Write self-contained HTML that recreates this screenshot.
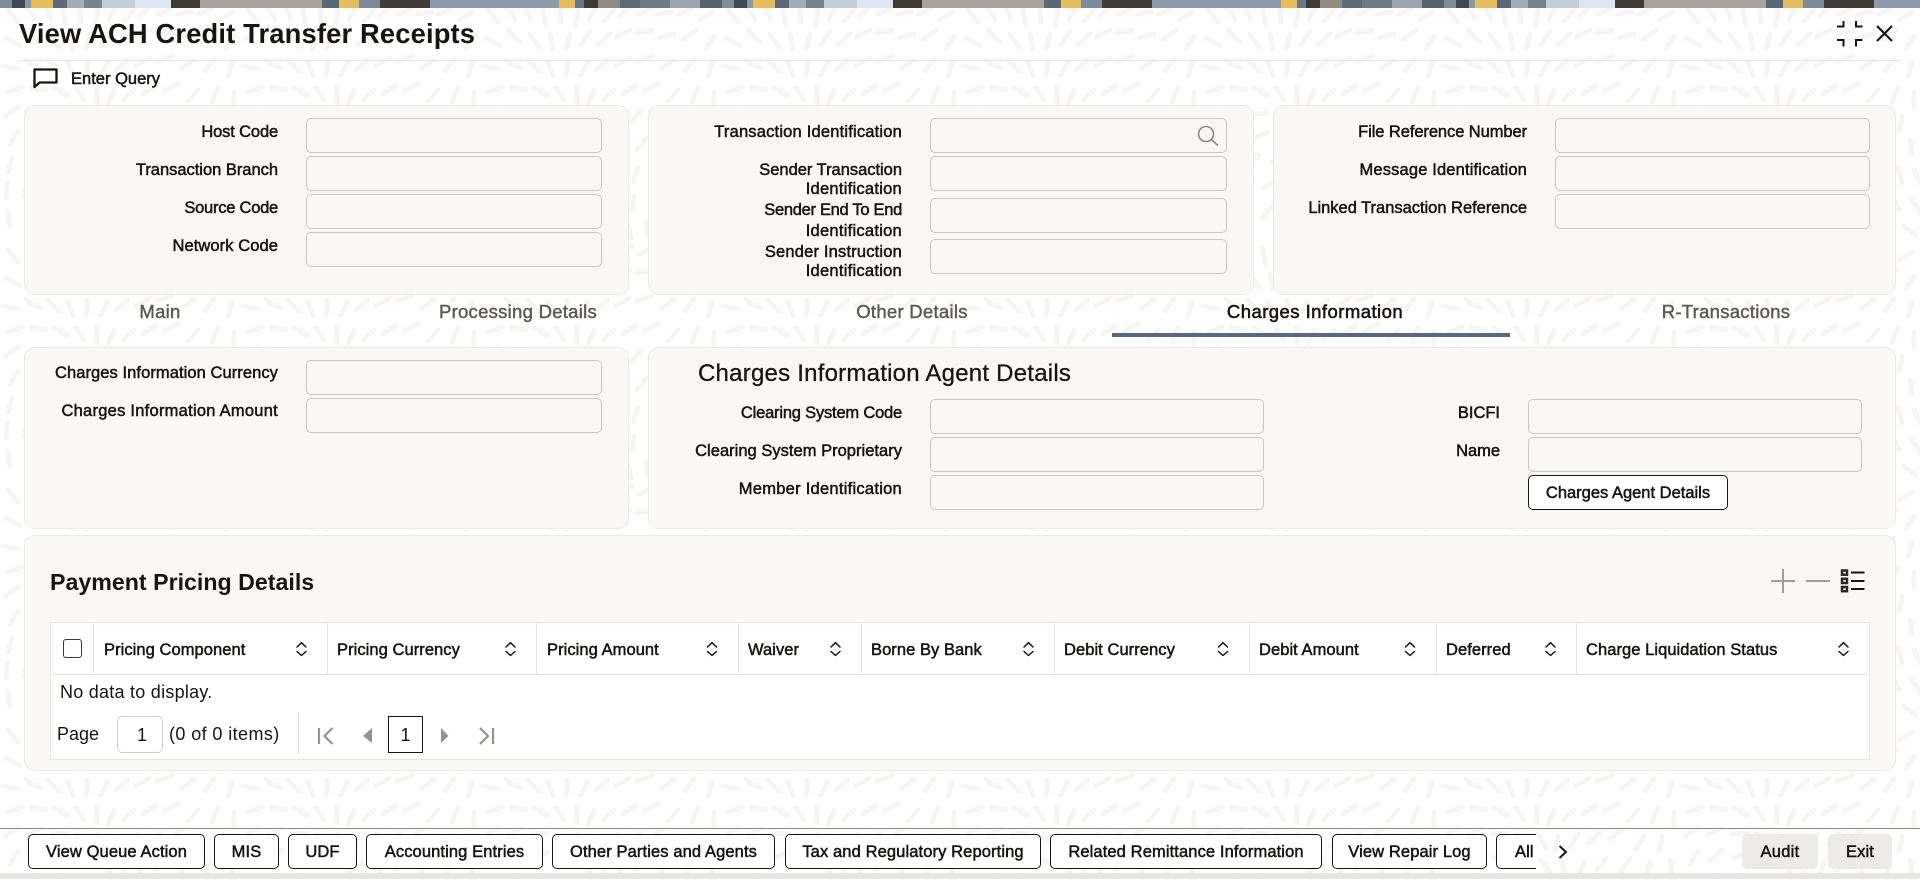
<!DOCTYPE html>
<html lang="en">
<head>
<meta charset="utf-8">
<title>View ACH Credit Transfer Receipts</title>
<style>
html,body{margin:0;padding:0;width:1920px;height:879px;overflow:hidden;background:#fff}
body{position:relative;font-family:"Liberation Sans",Arial,sans-serif;color:#161513}
.a,.l,.t,.c,.i,.b,.h,.ln{position:absolute;box-sizing:border-box}
#bg{position:absolute;left:0;top:0}
#band{position:absolute;left:0;top:0;width:1920px;height:8px;background-size:722px 8px;background-image:linear-gradient(90deg,#7f8c9a 0 12px,#3f4a55 12px 25px,#8a97a5 25px 31px,#e6bd5c 31px 53px,#5c6875 53px 67px,#a3adb8 67px 84px,#76838f 84px 102px,#c3cedc 102px 135px,#dde5f1 135px 171px,#3d3a38 171px 200px,#a8a29a 200px 322px,#5a6875 322px 339px,#e6bd5c 339px 359px,#7d8a99 359px 380px,#3f3c3a 380px 430px,#8e9baa 430px 559px,#e6bd5c 559px 575px,#6a7785 575px 584px,#3d3a38 584px 598px,#8f8a84 598px 620px,#5e6b78 620px 640px,#6e7a88 640px 670px,#9aa5b1 670px 700px,#55616d 700px 722px)}
.c{background:#f9f8f6;border:1px solid #ebeae8;border-radius:11px}
.i{background:#f9f8f6;border:1px solid #c9c7c4;border-radius:5px;height:35px;padding:0;margin:0;display:block}
.l{font-size:16.5px;line-height:20px;letter-spacing:-.02px;text-align:right;white-space:nowrap;-webkit-text-stroke:.5px #161513}
.t{font-size:18.5px;line-height:22px;letter-spacing:.27px;white-space:nowrap;color:#5d5955;-webkit-text-stroke:.45px #5d5955;transform:translateX(-50%)}
.h{font-size:16.5px;line-height:20px;letter-spacing:.06px;white-space:nowrap;top:640px;-webkit-text-stroke:.5px #161513}
.b{top:834px;height:35px;background:#fff;border:1px solid #161513;border-radius:5px;font:16.5px/34px "Liberation Sans",Arial,sans-serif;letter-spacing:.11px;text-align:center;color:#161513;padding:0;margin:0;white-space:nowrap;-webkit-text-stroke:.5px #161513}
.ln{background:#e6e5e2;width:1px;top:623px;height:51px}
.r{font-size:18px;line-height:22px;white-space:nowrap;position:absolute}
svg.ic{position:absolute;left:0;top:0;overflow:visible}
</style>
</head>
<body>
<svg id="bg" width="1920" height="879" xmlns="http://www.w3.org/2000/svg">
<defs>
<pattern id="rice" width="240" height="240" patternUnits="userSpaceOnUse">
<g stroke="#f6f5f3" stroke-width="5" stroke-linecap="round" fill="none">
<path d="M8 10l10 12M26 6l9 13M44 4l7 15M62 8l4 16M80 6l1 16M98 10l-3 15M116 6l-7 14M134 10l-10 11M152 6l-12 9M172 8l-14 6M192 12l-15 2M212 8l-14 6M232 12l-13 8"/>
<path d="M6 38l14 8M28 30l12 12M50 34l8 13M70 34l3 15M90 34l-4 15M110 32l-9 13M130 34l-12 10M150 30l-14 7M172 30l-15 3M194 34l-15 4M216 30l-13 9M234 36l-8 13"/>
<path d="M4 66l15 3M26 60l14 8M48 60l11 11M68 62l5 14M88 60l-2 15M108 62l-8 13M128 60l-12 10M150 58l-14 8M172 56l-15 5M194 60l-13 9M214 58l-9 13M232 62l-4 15"/>
<path d="M8 92l14-5M32 88l14 2M54 88l13 7M76 88l8 12M96 88l1 15M114 90l-6 14M134 90l-11 10M156 86l-13 8M178 84l-14 7M198 90l-10 11M218 88l-6 14M234 92l0 15"/>
<path d="M6 116l12-9M28 114l14-6M52 114l15-1M76 114l13 7M98 114l7 13M118 116l-3 15M138 114l-8 13M160 112l-11 11M182 110l-12 9M204 116l-8 13M222 116l-3 15"/>
<path d="M10 144l8-13M30 140l12-10M54 138l14-6M78 140l15 3M100 140l10 11M122 142l3 15M144 142l-5 14M166 138l-9 12M190 138l-8 13M210 142l-4 15M230 140l2 15"/>
<path d="M8 172l4-15M28 168l8-13M48 166l11-11M72 162l15-2M96 166l13 6M118 168l7 13M138 170l1 15M158 168l-5 14M178 166l-3 15M198 170l1 15M218 168l4 15M234 170l6 13"/>
<path d="M6 198l1-15M24 196l4-15M44 192l8-13M64 188l12-8M90 188l14 4M112 194l11 10M134 198l5 14M154 196l-2 15M174 194l1 15M192 198l4 14M212 196l7 13M232 200l8 12"/>
<path d="M10 226l-3-15M26 224l2-15M44 222l5-15M62 218l10-11M84 214l14 1M106 218l12 9M126 224l8 12M148 224l3 15M166 222l3 15M184 224l6 13M204 222l9 11M224 226l11 9"/>
</g>
</pattern>
</defs>
<rect width="1920" height="879" fill="#fff"/>
<rect width="1920" height="879" fill="url(#rice)"/>
</svg>
<div id="band"></div>

<div class="a" style="left:19px;top:18px;font-size:27.3px;line-height:32px;font-weight:700;letter-spacing:.17px;white-space:nowrap">View ACH Credit Transfer Receipts</div>
<div class="a" style="left:19px;top:60px;width:1882px;height:1px;background:#e6e5e3"></div>
<div class="a" style="left:71px;top:69px;font-size:16.5px;line-height:20px;letter-spacing:.01px;-webkit-text-stroke:.5px #161513;white-space:nowrap">Enter Query</div>

<!-- top cards -->
<div class="c" style="left:24px;top:105px;width:605px;height:190px"></div>
<div class="c" style="left:648px;top:105px;width:606px;height:190px"></div>
<div class="c" style="left:1273px;top:105px;width:623px;height:190px"></div>

<div class="l" style="right:1642px;top:122px;letter-spacing:-.15px">Host Code</div>
<div class="l" style="right:1642px;top:160px">Transaction Branch</div>
<div class="l" style="right:1642px;top:198px;letter-spacing:-.24px">Source Code</div>
<div class="l" style="right:1642px;top:236px;letter-spacing:.08px">Network Code</div>
<input class="i" readonly style="left:306px;top:118px;width:296px">
<input class="i" readonly style="left:306px;top:156px;width:296px">
<input class="i" readonly style="left:306px;top:194px;width:296px">
<input class="i" readonly style="left:306px;top:232px;width:296px">

<div class="l" style="right:1018px;top:122px;letter-spacing:.19px">Transaction Identification</div>
<div class="l" style="right:1018px;top:160px">Sender Transaction</div>
<div class="l" style="right:1018px;top:179px;letter-spacing:.26px">Identification</div>
<div class="l" style="right:1018px;top:200px;letter-spacing:-.3px">Sender End To End</div>
<div class="l" style="right:1018px;top:221px;letter-spacing:.26px">Identification</div>
<div class="l" style="right:1018px;top:242px;letter-spacing:.18px">Sender Instruction</div>
<div class="l" style="right:1018px;top:261px;letter-spacing:.26px">Identification</div>
<input class="i" readonly style="left:930px;top:118px;width:297px">
<input class="i" readonly style="left:930px;top:156px;width:297px">
<input class="i" readonly style="left:930px;top:198px;width:297px">
<input class="i" readonly style="left:930px;top:239px;width:297px">

<div class="l" style="right:393px;top:122px;letter-spacing:-.08px">File Reference Number</div>
<div class="l" style="right:393px;top:160px;letter-spacing:.15px">Message Identification</div>
<div class="l" style="right:393px;top:198px">Linked Transaction Reference</div>
<input class="i" readonly style="left:1555px;top:118px;width:315px">
<input class="i" readonly style="left:1555px;top:156px;width:315px">
<input class="i" readonly style="left:1555px;top:194px;width:315px">

<!-- tabs -->
<div class="t" style="left:160px;top:301px">Main</div>
<div class="t" style="left:518px;top:301px">Processing Details</div>
<div class="t" style="left:912px;top:301px">Other Details</div>
<div class="t" style="left:1315px;top:301px;color:#161513;letter-spacing:.45px;-webkit-text-stroke:.55px #161513">Charges Information</div>
<div class="t" style="left:1726px;top:301px">R-Transactions</div>
<div class="a" style="left:1112px;top:333px;width:398px;height:4px;background:#5b6788"></div>

<!-- charges cards -->
<div class="c" style="left:24px;top:347px;width:605px;height:182px"></div>
<div class="c" style="left:648px;top:347px;width:1248px;height:182px"></div>
<div class="l" style="right:1642px;top:363px;letter-spacing:.07px">Charges Information Currency</div>
<div class="l" style="right:1642px;top:401px;letter-spacing:.25px">Charges Information Amount</div>
<input class="i" readonly style="left:306px;top:360px;width:296px">
<input class="i" readonly style="left:306px;top:398px;width:296px">

<div class="a" style="left:698px;top:360px;font-size:24px;line-height:28px;letter-spacing:.23px;white-space:nowrap;-webkit-text-stroke:.3px #161513">Charges Information Agent Details</div>
<div class="l" style="right:1018px;top:403px;letter-spacing:-.2px">Clearing System Code</div>
<div class="l" style="right:1018px;top:441px;letter-spacing:.02px">Clearing System Proprietary</div>
<div class="l" style="right:1018px;top:479px;letter-spacing:.26px">Member Identification</div>
<input class="i" readonly style="left:930px;top:399px;width:334px">
<input class="i" readonly style="left:930px;top:437px;width:334px">
<input class="i" readonly style="left:930px;top:475px;width:334px">
<div class="l" style="right:420px;top:403px">BICFI</div>
<div class="l" style="right:420px;top:441px">Name</div>
<input class="i" readonly style="left:1528px;top:399px;width:334px">
<input class="i" readonly style="left:1528px;top:437px;width:334px">
<button class="b" style="left:1528px;top:475px;width:200px;letter-spacing:0">Charges Agent Details</button>

<!-- pricing -->
<div class="c" style="left:24px;top:535px;width:1872px;height:236px"></div>
<div class="a" style="left:50px;top:568px;font-size:23.2px;line-height:28px;font-weight:700;white-space:nowrap">Payment Pricing Details</div>
<div class="a" style="left:50px;top:622px;width:1820px;height:138px;background:#fff;border:1px solid #e6e5e2"></div>
<div class="a" style="left:51px;top:674px;width:1818px;height:1px;background:#e6e5e2"></div>
<div class="ln" style="left:93px"></div>
<div class="ln" style="left:327px"></div>
<div class="ln" style="left:536px"></div>
<div class="ln" style="left:738px"></div>
<div class="ln" style="left:861px"></div>
<div class="ln" style="left:1054px"></div>
<div class="ln" style="left:1249px"></div>
<div class="ln" style="left:1436px"></div>
<div class="ln" style="left:1576px"></div>
<div class="a" style="left:63px;top:639px;width:19px;height:19px;border:1.5px solid #3a3835;border-radius:3px;background:#fff"></div>
<div class="h" style="left:104px">Pricing Component</div>
<div class="h" style="left:337px">Pricing Currency</div>
<div class="h" style="left:547px">Pricing Amount</div>
<div class="h" style="left:748px">Waiver</div>
<div class="h" style="left:871px">Borne By Bank</div>
<div class="h" style="left:1064px">Debit Currency</div>
<div class="h" style="left:1259px">Debit Amount</div>
<div class="h" style="left:1446px">Deferred</div>
<div class="h" style="left:1586px">Charge Liquidation Status</div>

<div class="r" style="left:60px;top:681px;letter-spacing:.25px">No data to display.</div>
<div class="r" style="left:57px;top:723px">Page</div>
<div class="a" style="left:117px;top:716px;width:46px;height:37px;background:#fff;border:1px solid #d3d1ce;border-radius:5px;font-size:18px;line-height:37px;text-align:center;padding-left:4px">1</div>
<div class="r" style="left:169px;top:723px;letter-spacing:.4px">(0 of 0 items)</div>
<div class="a" style="left:298px;top:712px;width:1px;height:42px;background:#dddbd8"></div>
<div class="a" style="left:388px;top:716px;width:35px;height:37px;background:#fff;border:1px solid #161513;font-size:18px;line-height:36px;text-align:center">1</div>

<!-- toolbar -->
<div class="a" style="left:0;top:828px;width:1920px;height:1px;background:#8f8d8a"></div>
<div class="a" style="left:0;top:873px;width:1920px;height:6px;background:#e5e5e4"></div>
<button class="b" style="left:28px;width:177px">View Queue Action</button>
<button class="b" style="left:214px;width:65px">MIS</button>
<button class="b" style="left:288px;width:69px">UDF</button>
<button class="b" style="left:366px;width:177px">Accounting Entries</button>
<button class="b" style="left:552px;width:223px">Other Parties and Agents</button>
<button class="b" style="left:785px;width:256px">Tax and Regulatory Reporting</button>
<button class="b" style="left:1050px;width:272px">Related Remittance Information</button>
<button class="b" style="left:1332px;width:155px">View Repair Log</button>
<div class="a" style="left:1496px;top:834px;width:40px;height:35px;overflow:hidden"><button class="b" style="left:0;top:0;width:70px;text-align:left;padding-left:18px">All</button></div>
<div class="a" style="left:1742px;top:834px;width:76px;height:35px;background:#ecebe9;border-radius:5px;font-size:16.5px;line-height:36px;text-align:center;letter-spacing:.26px;-webkit-text-stroke:.5px #161513">Audit</div>
<div class="a" style="left:1828px;top:834px;width:64px;height:35px;background:#ecebe9;border-radius:5px;font-size:16.5px;line-height:36px;text-align:center;letter-spacing:.1px;-webkit-text-stroke:.5px #161513">Exit</div>

<!-- icons -->
<svg class="ic" width="1920" height="879" xmlns="http://www.w3.org/2000/svg" fill="none">
<defs>
<g id="sort" stroke="#161513" stroke-width="1.5" stroke-linecap="round" stroke-linejoin="round"><path d="M-4.5 647L0 642.7L4.5 647"/><path d="M-4.5 651.5L0 655.5L4.5 651.5"/></g>
</defs>
<path d="M34.5 87V69.5H56.5V82.5H39.5Z" stroke="#161513" stroke-width="2.3" stroke-linejoin="round"/>
<g stroke="#161513" stroke-width="2">
<path d="M1837 26.5H1843.5V21M1862.5 26.5H1856V21M1837 40H1843.5V46.5M1862.5 40H1856V46.5"/>
<path d="M1877 26L1892 41M1892 26L1877 41" stroke-width="2.2"/>
</g>
<g stroke="#8a8884" stroke-width="1.6"><circle cx="1206" cy="134" r="7.5"/><path d="M1211.5 139.5L1218 145.5"/></g>
<g stroke="#a09e9a" stroke-width="2"><path d="M1771 581H1795M1783 569V593M1806 581H1830"/></g>
<g stroke="#2a2826" stroke-width="2.5">
<rect x="1842" y="570.5" width="5" height="4.2"/>
<rect x="1842" y="578.8" width="5" height="4.2"/>
<rect x="1842" y="587" width="5" height="4.2"/>
<path d="M1851 572.5H1864.5M1851 581H1864.5M1851 589H1864.5" stroke="#161513" stroke-width="2"/>
</g>
<use href="#sort" x="301.5"/><use href="#sort" x="510.5"/><use href="#sort" x="712"/><use href="#sort" x="835.5"/><use href="#sort" x="1028.5"/><use href="#sort" x="1223"/><use href="#sort" x="1410"/><use href="#sort" x="1550.5"/><use href="#sort" x="1843.5"/>
<g stroke="#96938f" stroke-width="2.2">
<path d="M319 728V744M332.5 728L324.5 736L332.5 744"/>
<path d="M480 728L488 736L480 744M493 728V744"/>
</g>
<path d="M372 728L363 736L372 743Z" fill="#96938f"/>
<path d="M441 728L448.5 736L441 743Z" fill="#96938f"/>
<path d="M1559.5 846L1566 852L1559.5 858" stroke="#161513" stroke-width="2"/>
</svg>
</body>
</html>
